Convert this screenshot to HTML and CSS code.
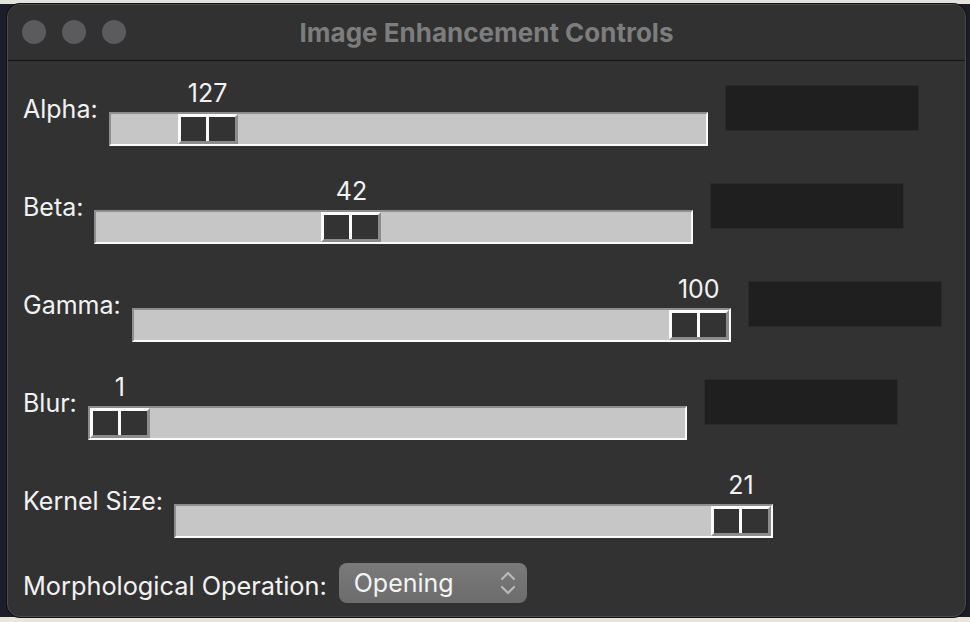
FILE: index.html
```html
<!DOCTYPE html>
<html>
<head>
<meta charset="utf-8">
<link rel="stylesheet" href="styles.css">
</head>
<body>
<div class="window">
  <div class="titlebar">
    <div class="lights"><span></span><span></span><span></span></div>
    <div class="title">Image Enhancement Controls</div>
  </div>
  <div class="content">
    <div class="row">
      <div class="label">Alpha:</div>
      <div class="slider">
        <div class="value-line"><span class="value" style="left:99px">127</span></div>
        <div class="track"><div class="thumb" style="left:67px"></div></div>
      </div>
      <div class="entry"></div>
    </div>
    <div class="row">
      <div class="label">Beta:</div>
      <div class="slider">
        <div class="value-line"><span class="value" style="left:257px">42</span></div>
        <div class="track"><div class="thumb" style="left:225px"></div></div>
      </div>
      <div class="entry"></div>
    </div>
    <div class="row">
      <div class="label">Gamma:</div>
      <div class="slider">
        <div class="value-line"><span class="value" style="left:567px">100</span></div>
        <div class="track"><div class="thumb" style="left:535px"></div></div>
      </div>
      <div class="entry"></div>
    </div>
    <div class="row">
      <div class="label">Blur:</div>
      <div class="slider">
        <div class="value-line"><span class="value" style="left:32px">1</span></div>
        <div class="track"><div class="thumb" style="left:0px"></div></div>
      </div>
      <div class="entry"></div>
    </div>
    <div class="row">
      <div class="label">Kernel Size:</div>
      <div class="slider">
        <div class="value-line"><span class="value" style="left:567px">21</span></div>
        <div class="track"><div class="thumb" style="left:535px"></div></div>
      </div>
    </div>
    <div class="row-select">
      <div class="label">Morphological Operation:</div>
      <div class="select">
        <span class="select-text">Opening</span>
        <svg class="chevrons" width="16" height="24" viewBox="0 0 16 24">
          <path d="M2 8 L8 2 L14 8" fill="none" stroke="#b9b9b9" stroke-width="2.2" stroke-linecap="round" stroke-linejoin="round"/>
          <path d="M2 16 L8 22 L14 16" fill="none" stroke="#b9b9b9" stroke-width="2.2" stroke-linecap="round" stroke-linejoin="round"/>
        </svg>
      </div>
    </div>
  </div>
</div>
</body>
</html>
```
FILE: styles.css
```css
html, body {
  margin: 0;
  padding: 0;
  width: 970px;
  height: 622px;
  overflow: hidden;
}
body {
  background: linear-gradient(#e4e2dc 0 4px, #1b1e2a 4px 617px, #e8e5da 617px);
  font-family: "Inter", "Liberation Sans", sans-serif;
}
.window {
  margin: 4px 0 0 7px;
  width: 959px;
  height: 613px;
  box-sizing: border-box;
  background: #323232;
  border-radius: 13px;
  border: 1px solid #4c4c4c;
  box-shadow: 0 0 0 1px #111;
  overflow: hidden;
  display: flex;
  flex-direction: column;
}
.titlebar {
  position: relative;
  height: 55px;
  flex: none;
  border-bottom: 1px solid #141414;
  display: flex;
  align-items: center;
  justify-content: center;
  background: #313131;
}
.lights {
  position: absolute;
  left: 14px;
  top: 15px;
  display: flex;
  gap: 16px;
}
.lights span {
  width: 24px;
  height: 24px;
  border-radius: 50%;
  background: #5b5b5d;
}
.title {
  color: #7d7d7d;
  font-weight: 700;
  font-size: 26px;
  margin-top: -1px;
}
.content {
  padding: 19px 0 0 15px;
  display: flex;
  flex-direction: column;
  gap: 32px;
}
.row {
  display: flex;
  align-items: flex-start;
}
.label {
  color: #f2f2f2;
  font-size: 25px;
  line-height: 32px;
  margin-top: 13px;
  margin-right: 11px;
  white-space: nowrap;
}
.slider {
  display: flex;
  flex-direction: column;
  width: 599px;
}
.value-line {
  position: relative;
  height: 26px;
  margin-bottom: 6px;
}
.value {
  position: absolute;
  top: 0;
  transform: translateX(-50%);
  color: #f2f2f2;
  font-size: 25px;
  line-height: 26px;
}
.track {
  position: relative;
  height: 34px;
  box-sizing: border-box;
  background: #c6c6c6;
  border-top: 2px solid #8e8e8e;
  border-left: 2px solid #8e8e8e;
  border-bottom: 2px solid #fafafa;
  border-right: 2px solid #fafafa;
}
.thumb {
  position: absolute;
  top: 0;
  width: 60px;
  height: 30px;
  box-sizing: border-box;
  background: #333333;
  border-top: 3px solid #fbfbfb;
  border-left: 3px solid #fbfbfb;
  border-bottom: 3px solid #8c8c8c;
  border-right: 3px solid #8c8c8c;
}
.thumb::after {
  content: "";
  position: absolute;
  left: 25px;
  top: 0;
  bottom: 0;
  width: 3px;
  background: #fbfbfb;
}
.entry {
  width: 192px;
  height: 44px;
  margin-top: 6px;
  margin-left: 18px;
  background: #1f1f1f;
  box-shadow: 0 0 0 1px #2a2a2a;
}
.row-select {
  display: flex;
  align-items: center;
  margin-top: -7px;
}
.row-select .label {
  font-size: 25.3px;
  margin-top: 5px;
  margin-right: 12px;
}
.select {
  width: 188px;
  height: 40px;
  box-sizing: border-box;
  border-radius: 8px;
  background: linear-gradient(#7a7a7a, #6c6c6c);
  display: flex;
  align-items: center;
  justify-content: space-between;
  padding: 0 11px 0 15px;
}
.select-text {
  color: #f4f4f4;
  font-size: 25px;
}
.chevrons {
  display: block;
}
```
